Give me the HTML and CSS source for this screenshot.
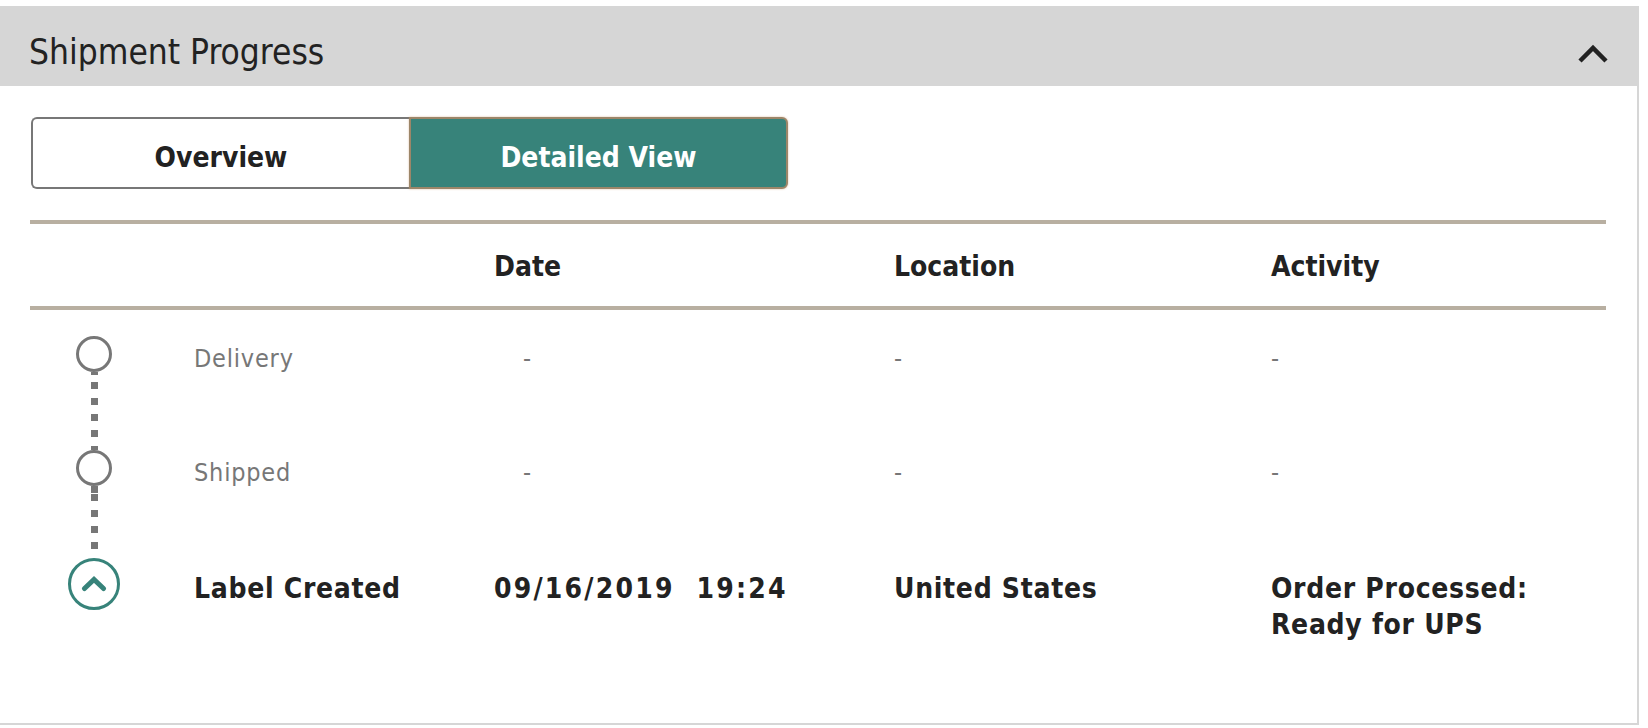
FILE: index.html
```html
<!DOCTYPE html>
<html lang="en">
<head>
  <meta charset="UTF-8">
  <meta name="viewport" content="width=device-width, initial-scale=1.0">
  <title>Shipment Progress</title>
  <link rel="stylesheet" href="styles.css">
</head>
<body>

  <div class="panel">
    <div class="panel-head">
      <h2>Shipment Progress</h2>
      <svg class="collapse" width="32" height="22" viewBox="0 0 32 22">
        <polyline points="3,19 16,6 29,19" fill="none" stroke="#222" stroke-width="4.5"/>
      </svg>
    </div>

    <div class="panel-body">
      <div class="toggle">
        <button class="toggle-btn">Overview</button>
        <button class="toggle-btn active">Detailed View</button>
      </div>

      <div class="progress-table">
        <div class="row head-row">
          <span></span>
          <span></span>
          <span>Date</span>
          <span>Location</span>
          <span>Activity</span>
        </div>

        <div class="timeline">
          <div class="row step first">
            <div class="marker"><span class="dot"></span><span class="link"></span></div>
            <div class="cell label">Delivery</div>
            <div class="cell empty-date">-</div>
            <div class="cell">-</div>
            <div class="cell">-</div>
          </div>

          <div class="row step second">
            <div class="marker"><span class="dot"></span><span class="link"></span></div>
            <div class="cell label">Shipped</div>
            <div class="cell empty-date">-</div>
            <div class="cell">-</div>
            <div class="cell">-</div>
          </div>

          <div class="row step current">
            <div class="marker">
              <span class="dot">
                <svg width="26" height="18" viewBox="0 0 26 18">
                  <polyline points="3.5,14.5 13,5.5 22.5,14.5" fill="none" stroke="#37837a" stroke-width="5" stroke-linecap="round"/>
                </svg>
              </span>
            </div>
            <div class="cell label">Label Created</div>
            <div class="cell date">09/16/2019&nbsp;&nbsp;19:24</div>
            <div class="cell">United States</div>
            <div class="cell">Order Processed:<br>Ready for UPS</div>
          </div>
        </div>
      </div>
    </div>
  </div>

</body>
</html>
```

FILE: styles.css
```css
body { margin: 0; background: #fff; font-family: "DejaVu Sans Condensed", "DejaVu Sans", sans-serif; font-stretch: condensed; color: #222; }

.panel { margin-top: 6px; width: 1637px; border-right: 2px solid #d6d6d6; border-bottom: 2px solid #d6d6d6; }
.panel-head { height: 80px; background: #d6d6d6; display: flex; align-items: center; justify-content: space-between; padding: 0 28px 0 29px; }
.panel-head h2 { margin: 12px 0 0; font-size: 35px; font-weight: normal; line-height: 35px; color: #222; }
.collapse { margin-top: 14px; }

.panel-body { padding: 31px 31px 80px 30px; }

.toggle { display: flex; margin-left: 1px; }
.toggle-btn { box-sizing: border-box; height: 72px; padding-top: 10px; font-family: inherit; font-stretch: condensed; font-size: 28px; font-weight: bold; cursor: pointer; }
.toggle-btn { width: 378px; background: #fff; color: #222; border: 2px solid #777; border-right: none; border-radius: 6px 0 0 6px; }
.toggle-btn.active { width: 379px; background: #37837a; color: #fff; border: 2px solid #9c8669; border-radius: 0 6px 6px 0; box-shadow: 0 0 2px rgba(190, 130, 80, 0.6); }

.progress-table { margin-top: 31px; }
.row { display: grid; grid-template-columns: 128px 336px 400px 377px 1fr; }
.head-row { height: 82px; align-items: center; border-top: 4px solid #b8afa1; border-bottom: 4px solid #b8afa1; font-size: 28px; font-weight: bold; line-height: 36px; }
.head-row span { padding-top: 4px; }

.timeline { padding-top: 26px; }
.step.first { height: 114px; }
.step.second { height: 108px; }

.marker { display: flex; flex-direction: column; align-items: center; }
.dot { box-sizing: border-box; width: 36px; height: 36px; border: 3px solid #777; border-radius: 50%; flex: none; }
.link { flex: 1; width: 7px; background: repeating-linear-gradient(to bottom, #777 0 7px, transparent 7px 16px); }
.first .link { background-position: 0 10px; }
.second .link { background-position: 0 8px; }

.current .dot { width: 52px; height: 52px; border-color: #37837a; display: flex; align-items: center; justify-content: center; }
.current .dot svg { margin-top: -2px; }

.cell { padding-top: 5px; font-size: 25px; line-height: 36px; letter-spacing: 0.8px; color: #777; }
.label { padding-left: 36px; }
.empty-date { padding-left: 29px; }

.current .cell { padding-top: 13px; font-size: 28px; font-weight: bold; letter-spacing: 0.7px; color: #222; }
.current .date { letter-spacing: 2.2px; }
```
